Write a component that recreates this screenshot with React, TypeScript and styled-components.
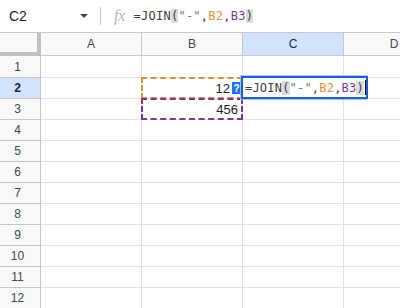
import React from "react";
import styled, { createGlobalStyle } from "styled-components";

const Global = createGlobalStyle`
  html, body { margin: 0; padding: 0; background: #ffffff; }
  body { font-family: "Liberation Sans", Arial, sans-serif; overflow: hidden; }
`;

const Page = styled.div`
  width: 400px;
  height: 308px;
  overflow: hidden;
  background: #fff;
`;

const FormulaBar = styled.div`
  height: 33px;
  box-sizing: border-box;
  border-bottom: 1px solid #c7c7c7;
  display: flex;
  align-items: center;
  background: #fff;
`;

const NameBox = styled.div`
  width: 100px;
  display: flex;
  align-items: center;
  justify-content: space-between;
  padding: 0 12px 0 9px;
  box-sizing: border-box;
  font-size: 14px;
  color: #1f1f1f;
`;

const Caret = styled.span`
  width: 0;
  height: 0;
  border-left: 4px solid transparent;
  border-right: 4px solid transparent;
  border-top: 4px solid #444746;
`;

const Divider = styled.span`
  width: 1px;
  height: 18px;
  background: #c7c7c7;
`;

const Fx = styled.span`
  font-family: "Liberation Serif", serif;
  font-style: italic;
  font-size: 16px;
  color: #b4b4b4;
  margin: 0 9px 0 13px;
  letter-spacing: -0.5px;
`;

const Formula = styled.div<{ $size: number; $ls: number }>`
  font-family: "DejaVu Sans Mono", "Liberation Mono", monospace;
  font-size: ${(p) => p.$size}px;
  letter-spacing: ${(p) => p.$ls}px;
  color: #3c4043;
  white-space: pre;
  display: flex;
  align-items: center;
`;

const Tok = styled.span<{ $c?: string; $hl?: boolean }>`
  color: ${(p) => p.$c || "#3c4043"};
  background: ${(p) => (p.$hl ? "#dcdcdc" : "transparent")};
`;

const Sheet = styled.div`
  position: relative;
  display: grid;
  grid-template-columns: 41px 101px 101px 101px 101px;
  grid-auto-rows: 21px;
  grid-template-rows: 23px 22px;
  width: 445px;
`;

const Corner = styled.div`
  background: #f8f9fa;
  box-sizing: border-box;
  border-right: 4px solid #c0c0c0;
  border-bottom: 4px solid #c0c0c0;
`;

const ColHead = styled.div<{ $sel?: boolean }>`
  box-sizing: border-box;
  border-right: 1px solid #c7c7c7;
  border-bottom: 1px solid #c7c7c7;
  background: ${(p) => (p.$sel ? "#d3e3fd" : "#f8f9fa")};
  color: ${(p) => (p.$sel ? "#0b2a5c" : "#444746")};
  font-size: 12px;
  display: flex;
  align-items: center;
  justify-content: center;
`;

const RowHead = styled.div<{ $sel?: boolean }>`
  box-sizing: border-box;
  border-right: 1px solid #c7c7c7;
  border-bottom: 1px solid #c7c7c7;
  background: ${(p) => (p.$sel ? "#d3e3fd" : "#f8f9fa")};
  color: ${(p) => (p.$sel ? "#0b2a5c" : "#444746")};
  font-weight: ${(p) => (p.$sel ? 700 : 400)};
  font-size: 12px;
  display: flex;
  align-items: center;
  justify-content: center;
  padding-right: 5px;
`;

const Cell = styled.div<{ $pr?: number }>`
  position: relative;
  box-sizing: border-box;
  border-right: 1px solid #e1e1e1;
  border-bottom: 1px solid #e1e1e1;
  font-size: 13px;
  color: #1f1f1f;
  display: flex;
  align-items: center;
  justify-content: flex-end;
  padding-right: ${(p) => p.$pr ?? 4}px;
`;

const RangeMark = styled.span<{ $c: string }>`
  position: absolute;
  left: -1px;
  top: -1px;
  right: -1px;
  bottom: -1px;
  border: 2px dashed ${(p) => p.$c};
  pointer-events: none;
`;

const Editor = styled.div`
  position: absolute;
  left: 240px;
  top: 42px;
  width: 127px;
  height: 25px;
  box-sizing: border-box;
  border: 1px solid #a8c7fa;
  background: #fff;
  display: flex;
`;

const EditorInner = styled.div`
  flex: 1;
  border: 2px solid #1a5fd0;
  display: flex;
  align-items: center;
  padding-left: 2px;
`;

const Cursor = styled.span`
  width: 1px;
  height: 15px;
  background: #000;
  margin-left: 1px;
`;

const Badge = styled.div`
  position: absolute;
  left: 232px;
  top: 49px;
  width: 9px;
  height: 12px;
  background: #1a73e8;
  color: #fff;
  font-size: 10px;
  font-weight: 700;
  display: flex;
  align-items: center;
  justify-content: center;
`;

const ORANGE = "#e69138";
const PURPLE = "#7e3794";
const STR = "#5f7d82";

function FormulaTokens() {
  return (
    <>
      <Tok>=JOIN</Tok>
      <Tok $hl>(</Tok>
      <Tok $c={STR}>"-"</Tok>
      <Tok>,</Tok>
      <Tok $c={ORANGE}>B2</Tok>
      <Tok>,</Tok>
      <Tok $c={PURPLE}>B3</Tok>
      <Tok $hl>)</Tok>
    </>
  );
}

const cols = ["A", "B", "C", "D"];
const rows = Array.from({ length: 12 }, (_, i) => i + 1);

export default function App() {
  return (
    <Page>
      <Global />
      <FormulaBar>
        <NameBox>
          <span>C2</span>
          <Caret />
        </NameBox>
        <Divider />
        <Fx>fx</Fx>
        <Formula $size={12} $ls={0.25}>
          <FormulaTokens />
        </Formula>
      </FormulaBar>
      <Sheet>
        <Corner />
        {cols.map((c) => (
          <ColHead key={c} $sel={c === "C"}>
            {c}
          </ColHead>
        ))}
        {rows.map((r) => (
          <React.Fragment key={r}>
            <RowHead $sel={r === 2}>{r}</RowHead>
            {cols.map((c) => (
              <Cell key={c} $pr={c === "B" && r === 2 ? 12 : 4}>
                {c === "B" && r === 2 && "12"}
                {c === "B" && r === 3 && "456"}
                {c === "B" && r === 2 && <RangeMark $c={ORANGE} />}
                {c === "B" && r === 3 && <RangeMark $c={PURPLE} />}
              </Cell>
            ))}
          </React.Fragment>
        ))}
        <Badge>?</Badge>
        <Editor>
          <EditorInner>
            <Formula $size={12} $ls={0.2}>
              <FormulaTokens />
              <Cursor />
            </Formula>
          </EditorInner>
        </Editor>
      </Sheet>
    </Page>
  );
}
